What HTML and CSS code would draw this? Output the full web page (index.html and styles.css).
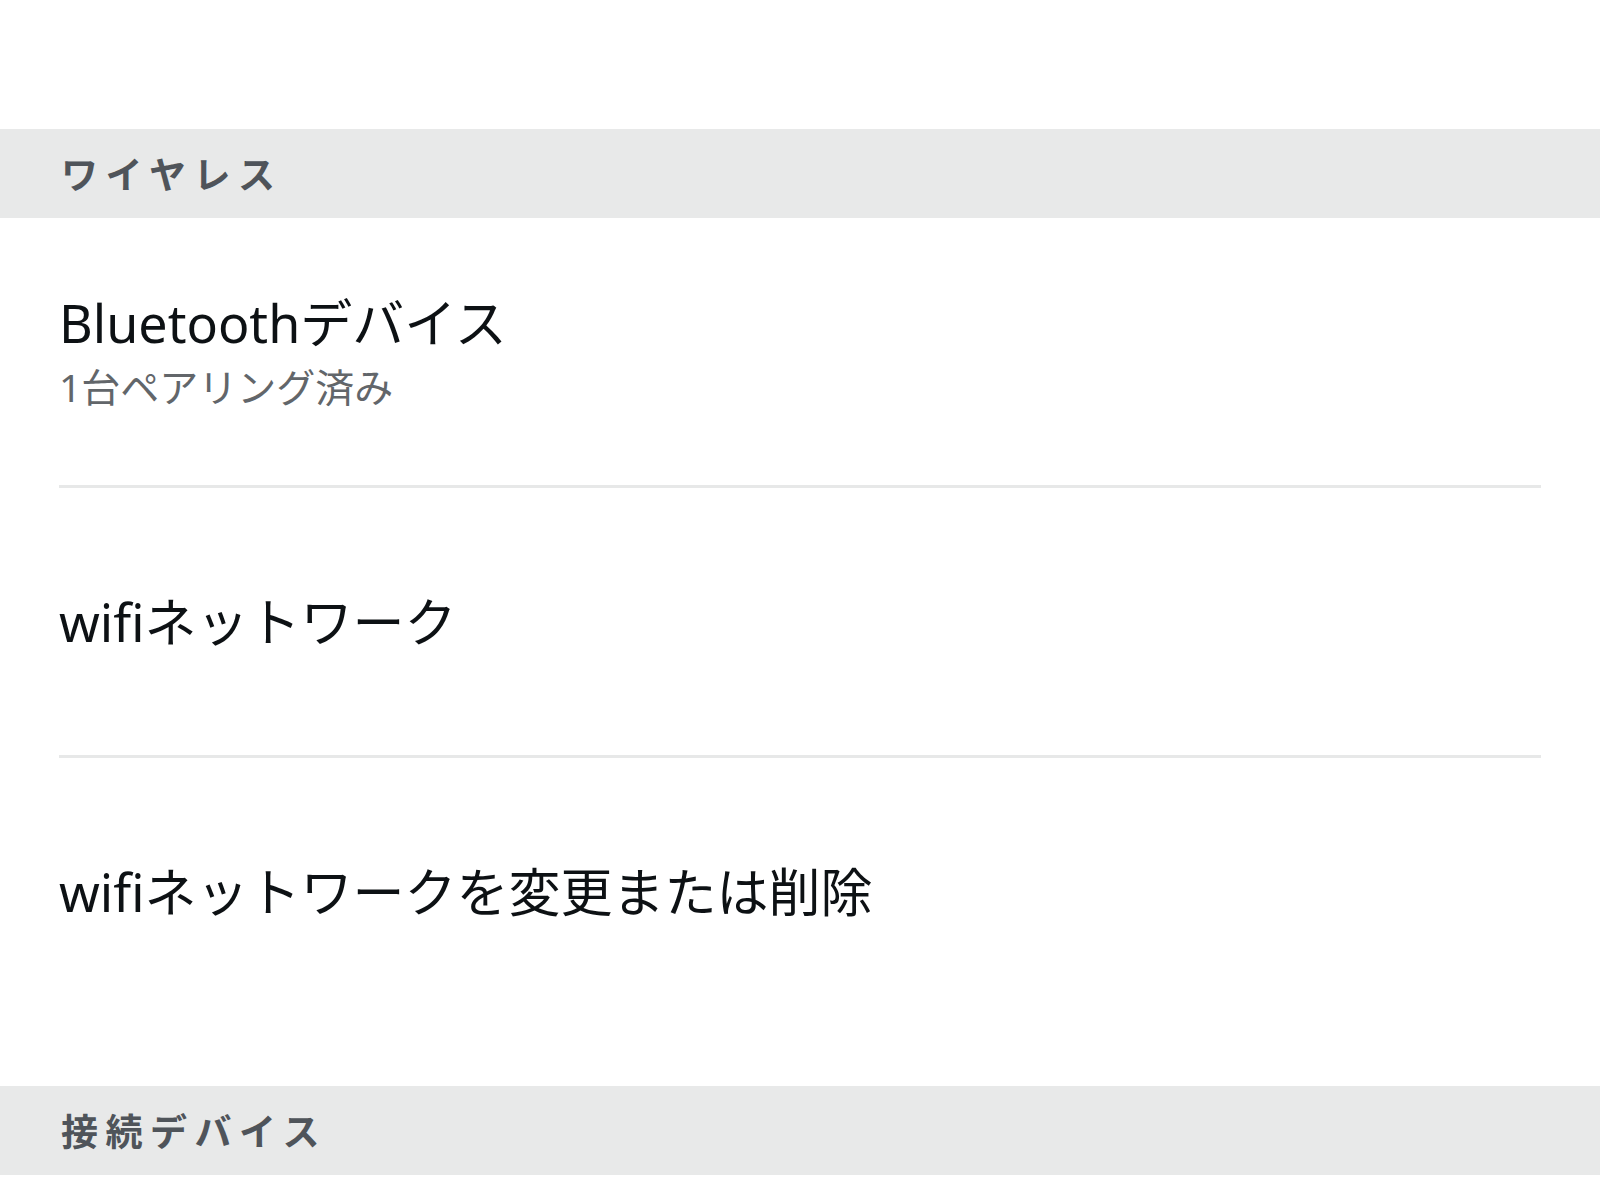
FILE: index.html
```html
<!DOCTYPE html>
<html lang="ja">
<head>
    <meta charset="UTF-8">
    <meta name="viewport" content="width=device-width, initial-scale=1.0">
    <title>ワイヤレス設定</title>
    <link rel="stylesheet" href="styles.css">
</head>
<body>
    <div class="settings">
        <div class="section-header">ワイヤレス</div>
        <ul class="list">
            <li class="row">
                <div class="row-title">Bluetoothデバイス</div>
                <div class="row-sub">1台ペアリング済み</div>
            </li>
            <li class="row">
                <div class="row-title">wifiネットワーク</div>
            </li>
            <li class="row">
                <div class="row-title">wifiネットワークを変更または削除</div>
            </li>
        </ul>
        <div class="section-header">接続デバイス</div>
    </div>
</body>
</html>
```

FILE: styles.css
```css
body {
    margin: 0;
    background: #ffffff;
    font-family: "Noto Sans", "Noto Sans CJK JP", sans-serif;
    color: #0d1114;
}
.settings {
    padding-top: 129px;
}
.section-header {
    height: 89px;
    display: flex;
    align-items: center;
    padding-left: 61px;
    background: #e8e9e9;
    color: #4f545a;
    font-size: 37px;
    font-weight: bold;
    letter-spacing: 7.5px;
    padding-bottom: 2px;
    box-sizing: border-box;
}
.list {
    list-style: none;
    margin: 0;
    padding: 0 59px 61px;
}
.row {
    height: 267px;
    display: flex;
    flex-direction: column;
    justify-content: center;
    border-bottom: 3px solid #e7e8e8;
}
.row:last-child {
    border-bottom: none;
}
.row-title {
    font-size: 52px;
    line-height: 62px;
}
.row-sub {
    font-size: 39px;
    line-height: 50px;
    color: #62666a;
    margin-top: 8px;
}
```
